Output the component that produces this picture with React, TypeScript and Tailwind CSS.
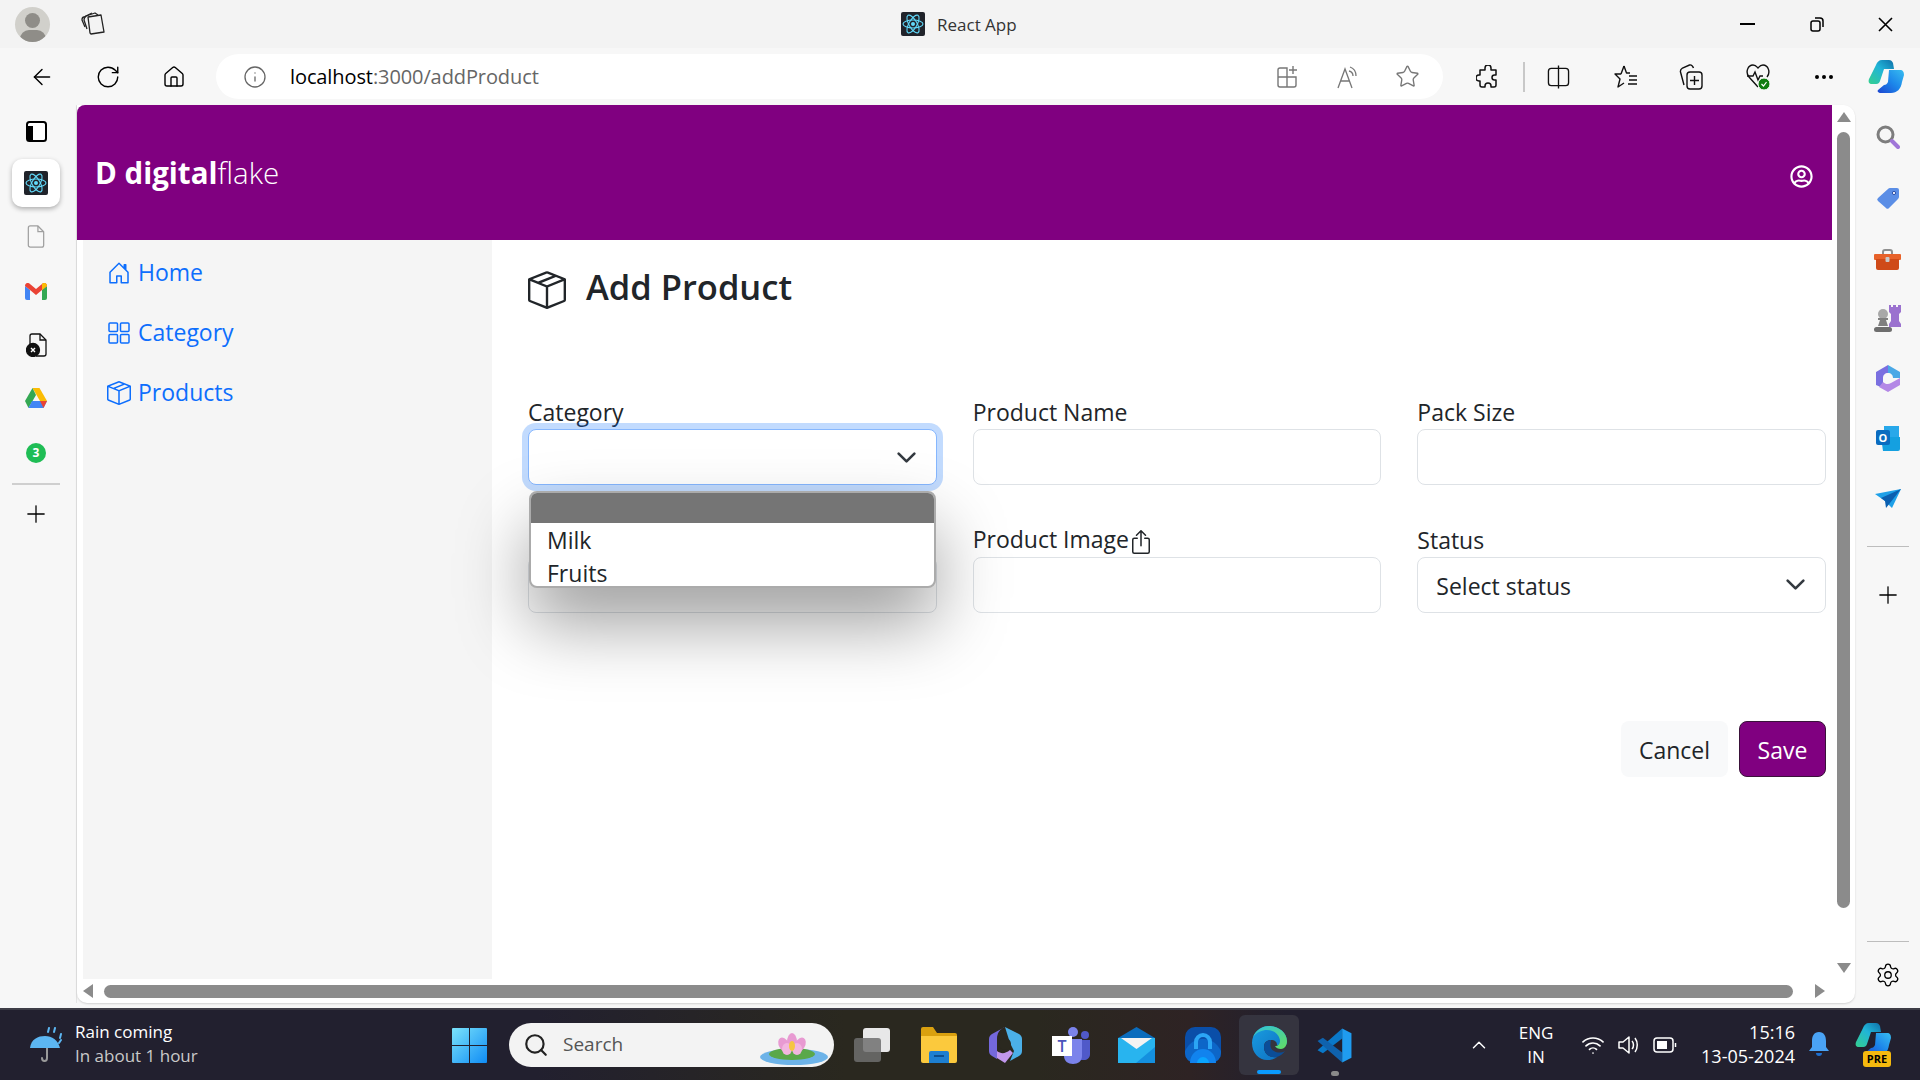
import React from "react"
import { ArrowLeft, RotateCw, House, Info, Star, Plus, Settings, Ellipsis, ChevronUp, Wifi, Search } from "lucide-react"
import { BsHouseDoor, BsBoxSeam, BsBoxArrowUp } from "react-icons/bs"
import { FaRegUserCircle } from "react-icons/fa"

const Chevron = ({ className }: { className: string }) => (
  <svg viewBox="0 0 16 16" className={className} fill="none" stroke="#343a40" strokeWidth="2" strokeLinecap="round" strokeLinejoin="round">
    <path d="m2 5 6 6 6-6" />
  </svg>
)

const ReactLogo = ({ className }: { className: string }) => (
  <svg viewBox="0 0 24 24" className={className}>
    <rect width="24" height="24" rx="2" fill="#20232a" />
    <g fill="none" stroke="#61dafb" strokeWidth="1.1">
      <ellipse cx="12" cy="12" rx="10" ry="4" />
      <ellipse cx="12" cy="12" rx="10" ry="4" transform="rotate(60 12 12)" />
      <ellipse cx="12" cy="12" rx="10" ry="4" transform="rotate(120 12 12)" />
    </g>
    <circle cx="12" cy="12" r="2" fill="#61dafb" />
  </svg>
)

const Copilot = ({ className }: { className: string }) => (
  <svg viewBox="0 0 36 34" className={className}>
    <defs>
      <linearGradient id="cpA" x1="0" y1="1" x2="1" y2="0">
        <stop offset="0" stopColor="#1d45d0" />
        <stop offset="0.5" stopColor="#1c86ea" />
        <stop offset="1" stopColor="#38bdf0" />
      </linearGradient>
      <linearGradient id="cpB" x1="0" y1="1" x2="1" y2="0">
        <stop offset="0" stopColor="#35d08f" />
        <stop offset="0.55" stopColor="#20b4d8" />
        <stop offset="1" stopColor="#0f6fa8" />
      </linearGradient>
    </defs>
    <path d="M18 0h3c2 0 3 1 4 3l1 6H16l-4 12c-1 3-3 3-5 3H4c-3 0-4-2-3-5L8 5c1-3 3-5 6-5Z" fill="url(#cpB)" />
    <path d="M21 10h11c3 0 4 2 4 5l-2 7c-1 7-5 11-11 11H13c-3 0-4-2-3-3l6-5c2 0 3-1 4-3Z" fill="url(#cpA)" />
  </svg>
)

const Windows = () => (
  <svg viewBox="0 0 35 35" className="w-[35px] h-[35px]">
    <defs>
      <linearGradient id="winG" x1="0" y1="0" x2="1" y2="1">
        <stop offset="0" stopColor="#7be3fb" />
        <stop offset="1" stopColor="#0f8cf5" />
      </linearGradient>
    </defs>
    <path d="M1 0h16v17H0V1a1 1 0 0 1 1-1ZM18 0h16a1 1 0 0 1 1 1v16H18ZM0 18h17v17H1a1 1 0 0 1-1-1ZM18 18h17v16a1 1 0 0 1-1 1H18Z" fill="url(#winG)" />
  </svg>
)

const Edge = () => (
  <svg viewBox="0 0 36 36" className="w-[36px] h-[36px]">
    <defs>
      <linearGradient id="edgeA" x1="0" y1="0" x2="1" y2="1">
        <stop offset="0" stopColor="#1a9ee0" />
        <stop offset="1" stopColor="#0c6cc0" />
      </linearGradient>
      <linearGradient id="edgeB" x1="0" y1="0" x2="1" y2="1">
        <stop offset="0" stopColor="#2fc2de" />
        <stop offset="1" stopColor="#63dd62" />
      </linearGradient>
    </defs>
    <path d="M18 1C8 1 1 9 1 18c0 10 7 17 15 17 4 0 8-1 10-3-6 1-13-2-13-10 0-5 3-7 7-7 4 0 6 2 6 5h8c2 0 2-2 2-4C36 8 28 1 18 1Z" fill="url(#edgeA)" />
    <path d="M13 22c0 8 7 11 13 10 3-1 6-3 8-6-3 2-8 2-11 0-4-2-4-6-3-11-4 0-7 3-7 7Z" fill="#0b4d97" />
    <path d="M18 1C11 1 5 5 2 12c4-5 9-7 14-7 8 0 13 6 13 11 0 3-2 5-5 5 1 2 3 3 6 3 3 0 6-3 6-8C36 8 28 1 18 1Z" fill="url(#edgeB)" />
  </svg>
)

const Lotus = () => (
  <svg viewBox="0 0 68 32" className="w-[68px] h-[32px]">
    <ellipse cx="34" cy="24" rx="34" ry="8" fill="#6db3e8" />
    <ellipse cx="32" cy="21" rx="23" ry="6" fill="#5aa84a" />
    <g fill="#e89ad2">
      <ellipse cx="32" cy="9" rx="5" ry="9" />
      <ellipse cx="24" cy="12" rx="5" ry="8" transform="rotate(-28 24 12)" />
      <ellipse cx="40" cy="12" rx="5" ry="8" transform="rotate(28 40 12)" />
      <ellipse cx="27" cy="16" rx="5" ry="6" fill="#f2b6e0" />
      <ellipse cx="37" cy="16" rx="5" ry="6" fill="#f2b6e0" />
    </g>
    <ellipse cx="32" cy="13" rx="3" ry="5" fill="#f5c542" />
  </svg>
)

const Umbrella = () => (
  <svg viewBox="0 0 36 36" className="w-[36px] h-[36px]">
    <path d="M18 14v17c0 4-5 4-5 0" fill="none" stroke="#9a9a9a" strokeWidth="2" strokeLinecap="round" />
    <path d="M1 21C2 12 9 9 16 9s13 4 15 12Z" fill="#5cb6f2" />
    <g stroke="#5cb6f2" strokeWidth="2" strokeLinecap="round">
      <path d="M19 5l1-4M25 5l1-4M31 11l1-4M30 16l2-3" />
    </g>
  </svg>
)

export default function App() {
  return (
    <div className="w-[1920px] h-[1080px] overflow-hidden flex flex-col bg-[#f7f7f7] font-['Open_Sans','Noto_Sans',sans-serif] text-[#212529]">
      {/* window title bar */}
      <div className="h-[48px] shrink-0 bg-[#f3f3f3] flex items-center">
        <div className="ml-[15px] w-[35px] h-[35px] rounded-full bg-[#d1d0cb] overflow-hidden relative">
          <div className="mx-auto mt-[6px] w-[15px] h-[15px] rounded-full bg-[#8f8d88]" />
          <div className="mx-auto mt-[2px] w-[26px] h-[18px] rounded-full bg-[#8f8d88]" />
        </div>
        <svg viewBox="0 0 24 24" className="ml-[31px] w-[24px] h-[24px]" fill="none" stroke="#222" strokeWidth="1.3" strokeLinejoin="round">
          <path d="M9 22 7 6l13-2 3 17-13 2Z" fill="#f3f3f3" transform="translate(0 -1)" />
          <path d="M6 17 3 8c0-2 1-3 2-4l9-3 3 2" />
          <path d="M4 15 1 8c0-2 1-3 2-3l8-4" />
        </svg>
        <div className="ml-[796px] w-[24px] h-[24px]">
          <ReactLogo className="w-[24px] h-[24px]" />
        </div>
        <span className="ml-[12px] mt-[2px] text-[17px] text-[#333]">React App</span>
        <div className="ml-auto w-[15px] h-[2px] bg-black" />
        <svg viewBox="0 0 14 16" className="ml-[55px] w-[14px] h-[16px]" fill="none" stroke="#000" strokeWidth="1.5">
          <rect x="1" y="5" width="9" height="10" rx="2" />
          <path d="M5 2h5a3 3 0 0 1 3 3v6" />
        </svg>
        <svg viewBox="0 0 15 15" className="ml-[54px] mr-[27px] w-[15px] h-[15px]" stroke="#000" strokeWidth="1.6">
          <path d="M1 1l13 13M14 1 1 14" />
        </svg>
      </div>

      {/* browser toolbar */}
      <div className="h-[57px] shrink-0 flex items-center">
        <ArrowLeft className="ml-[29px] w-[26px] h-[26px] text-black" strokeWidth={1.3} />
        <RotateCw className="ml-[40px] w-[26px] h-[26px] text-black" strokeWidth={1.3} />
        <House className="ml-[41px] w-[24px] h-[24px] text-black" strokeWidth={1.4} />
        <div className="ml-[30px] w-[1227px] h-[45px] rounded-full bg-white flex items-center">
          <Info className="ml-[27px] w-[24px] h-[24px] text-[#666]" strokeWidth={1.3} />
          <span className="ml-[23px] text-[20px] tracking-[-0.1px]">
            <span className="text-black">localhost</span>
            <span className="text-[#666]">:3000/addProduct</span>
          </span>
          <svg viewBox="0 0 22 24" className="ml-auto w-[22px] h-[24px]" fill="none" stroke="#777" strokeWidth="1.4">
            <path d="M11 12H2v8a2 2 0 0 0 2 2h7Zm0 0h9v8a2 2 0 0 1-2 2h-7M11 12V3H4a2 2 0 0 0-2 2v7" />
            <path d="M17 1v8M13 5h8" />
          </svg>
          <svg viewBox="0 0 24 24" className="ml-[38px] w-[24px] h-[24px]" fill="none" stroke="#777" strokeWidth="1.3">
            <path d="M2 23 9 4l7 19M4.5 16h9" />
            <path d="M14 2c3 1 6 4 6 9M13 6c2 .5 4 2 4 5" />
          </svg>
          <Star className="ml-[35px] mr-[23px] w-[25px] h-[25px] text-[#777]" strokeWidth={1.3} />
        </div>
        <svg viewBox="0 0 24 24" className="ml-[33px] w-[24px] h-[24px]" fill="none" stroke="#111" strokeWidth="1.5" strokeLinejoin="round">
          <path d="M9 3a3 3 0 0 1 6 0v2h5v5h-1.5a2.5 2.5 0 0 0 0 5H20v5a2 2 0 0 1-2 2h-3v-1a3 3 0 0 0-6 0v1H6a2 2 0 0 1-2-2v-4H3a3 3 0 0 1 0-6h1V5h5Z" />
        </svg>
        <div className="ml-[23px] w-[2px] h-[30px] bg-[#c8c8c8]" />
        <svg viewBox="0 0 24 26" className="ml-[22px] w-[23px] h-[26px]" fill="none" stroke="#111" strokeWidth="1.4">
          <path d="M12 1v24" />
          <rect x="1.5" y="4" width="21" height="18" rx="3" />
        </svg>
        <svg viewBox="0 0 24 24" className="ml-[44px] w-[24px] h-[24px]" fill="none" stroke="#111" strokeWidth="1.4" strokeLinejoin="round">
          <path d="M10 1l2.5 7H16M7 9H1l5 5-2 8 6-4M10 1 7 9" />
          <path d="M15 11h8M15 15h8M14 19h9" />
        </svg>
        <svg viewBox="0 0 24 26" className="ml-[41px] w-[24px] h-[26px]" fill="none" stroke="#111" strokeWidth="1.4">
          <rect x="8" y="8" width="15" height="17" rx="3" />
          <path d="M15.5 12v9M11 16.5h9" />
          <path d="M5 21 1.5 8c-.5-2 .5-3 2-4l7-3c2-.5 3 .5 4 3" />
        </svg>
        <svg viewBox="0 0 25 28" className="ml-[43px] w-[25px] h-[28px]" fill="none" stroke="#111" strokeWidth="1.4">
          <path d="M12 24 3 14C-1 9 2 2 7 2c3 0 4 2 5 3 1-1 2-3 5-3 5 0 8 7 4 12" />
          <path d="M1 13h6l2-4 3 8 2-4h3" />
          <circle cx="18" cy="21" r="6" fill="#107c10" stroke="#f7f7f7" strokeWidth="1" />
          <path d="m15.5 21 2 2 3-4" stroke="#fff" strokeWidth="1.2" />
        </svg>
        <Ellipsis className="ml-[41px] w-[24px] h-[24px] text-black" strokeWidth={2} />
        <Copilot className="ml-[32px] w-[36px] h-[34px]" />
      </div>

      <div className="h-[898px] shrink-0 flex">
        {/* left sidebar rail */}
        <div className="w-[77px] shrink-0 flex flex-col items-center border-r border-[#e4e4e4] pr-[4px]">
          <svg viewBox="0 0 21 21" className="mt-[16px] w-[21px] h-[21px]">
            <rect x="1" y="1" width="19" height="19" rx="2.5" fill="#fff" stroke="#000" strokeWidth="2" />
            <rect x="1" y="5" width="6" height="15" fill="#000" />
          </svg>
          <div className="mt-[17px] w-[48px] h-[48px] rounded-[10px] bg-white shadow-[0_2px_5px_rgba(0,0,0,0.3)] flex items-center justify-center">
            <ReactLogo className="w-[24px] h-[24px]" />
          </div>
          <svg viewBox="0 0 18 24" className="mt-[18px] w-[18px] h-[23px]" fill="none" stroke="#a0a0a0" strokeWidth="1.3">
            <path d="M3 1h8l6 6v14a2 2 0 0 1-2 2H3a2 2 0 0 1-2-2V3a2 2 0 0 1 2-2Z" />
            <path d="M11 1v6h6" />
          </svg>
          <svg viewBox="0 0 22 17" className="mt-[35px] w-[22px] h-[17px]">
            <path d="M0 3v12a2 2 0 0 0 2 2h3V7Z" fill="#4285f4" />
            <path d="M17 7v10h3a2 2 0 0 0 2-2V3Z" fill="#34a853" />
            <path d="M0 3c0-3 3-4 5-2l6 5 6-5c2-2 5-1 5 2l-5 4-6 5-6-5Z" fill="#ea4335" />
            <path d="M17 1c2-2 5-1 5 2l-5 4Z" fill="#fbbc04" />
          </svg>
          <svg viewBox="0 0 21 24" className="mt-[33px] w-[21px] h-[24px]" fill="none" stroke="#111" strokeWidth="1.3">
            <path d="M4 12V3a2 2 0 0 1 2-2h8l6 6v14a2 2 0 0 1-2 2H10" />
            <path d="M14 1v6h6" />
            <circle cx="7" cy="17" r="6.5" fill="#111" />
            <path d="m5 15 4 4m0-4-4 4" stroke="#fff" strokeWidth="1.4" />
          </svg>
          <svg viewBox="0 0 22 21" className="mt-[31px] w-[22px] h-[21px]">
            <path d="M7.5 0h7L22 13h-7Z" fill="#fbbc04" />
            <path d="M7.5 0 0 13l3.5 7L11 7Z" fill="#34a853" />
            <path d="M3.5 20 7 13h15l-3.5 7Z" fill="#4285f4" />
            <path d="M18.5 20 15 13h7Z" fill="#ea4335" />
          </svg>
          <div className="mt-[34px] w-[20px] h-[20px] rounded-full bg-[#1fbd55] flex items-center justify-center text-white text-[12px] font-bold leading-none">
            3
          </div>
          <div className="mt-[20px] w-[48px] h-[2px] bg-[#cfcfcf]" />
          <Plus className="mt-[15px] w-[28px] h-[28px] text-black" strokeWidth={1.1} />
        </div>

        {/* page viewport */}
        <div className="w-[1778px] shrink-0 flex flex-col bg-white rounded-tr-[12px] rounded-b-[10px] shadow-[0_1px_2px_rgba(0,0,0,0.15)]">
          <div className="h-[874px] flex">
            <div className="w-[1755px] flex flex-col">
              <div className="h-[135px] shrink-0 bg-[#800080] rounded-tl-[8px] flex items-center justify-between pl-[18px] pr-[19px] text-white">
                <div className="text-[29.5px] leading-none">
                  <span className="font-bold">D digital</span>
                  <span className="font-light">flake</span>
                </div>
                <FaRegUserCircle className="mt-[7px] w-[23px] h-[23px] text-white" />
              </div>
              <div className="flex-1 flex">
                {/* side nav */}
                <div className="ml-[6px] w-[409px] bg-[#f5f5f5] flex flex-col pl-[24px] pt-[14px] gap-[24px] text-[#0d6efd] text-[23px]">
                  <div className="h-[36px] flex items-center gap-[7px]">
                    <BsHouseDoor className="w-[24px] h-[24px] mt-[2px]" />
                    <span>Home</span>
                  </div>
                  <div className="h-[36px] flex items-center gap-[7px]">
                    <svg viewBox="0 0 24 24" className="w-[24px] h-[24px] mt-[2px]" fill="none" stroke="currentColor" strokeWidth="1.5">
                      <rect x="2" y="2" width="8.5" height="8.5" rx="1" />
                      <rect x="13.5" y="2" width="8.5" height="8.5" rx="1" />
                      <rect x="2" y="13.5" width="8.5" height="8.5" rx="1" />
                      <rect x="13.5" y="13.5" width="8.5" height="8.5" rx="1" />
                    </svg>
                    <span>Category</span>
                  </div>
                  <div className="h-[36px] flex items-center gap-[7px]">
                    <BsBoxSeam className="w-[24px] h-[24px] mt-[2px]" />
                    <span>Products</span>
                  </div>
                </div>

                {/* form */}
                <div className="flex-1 pl-[36px] pr-[6px] pt-[20px]">
                  <div className="h-[54px] flex items-center gap-[20px]">
                    <BsBoxSeam className="w-[38px] h-[38px] mt-[5px] text-[#212529]" />
                    <h1 className="text-[34.5px] font-semibold">Add Product</h1>
                  </div>
                  <div className="mt-[79px] grid grid-cols-3 gap-x-[36px] gap-y-[36px] text-[23px]">
                    <div>
                      <div className="h-[36px] leading-[38px]">Category</div>
                      <div className="relative h-[56px] rounded-lg bg-white border border-[#86b7fe] shadow-[0_0_0_6px_rgba(13,110,253,0.25)] flex items-center justify-end pr-[19px]">
                        <Chevron className="w-[21px] h-[21px]" />
                        <div className="absolute z-10 left-[0px] top-[61px] w-[407px] h-[97px] rounded-lg border-2 border-[#ababab] bg-white overflow-hidden shadow-[0_36px_70px_rgba(0,0,0,0.38)]">
                          <div className="h-[30px] bg-[#757575]" />
                          <div className="h-[33px] leading-[35px] pl-[16px]">Milk</div>
                          <div className="h-[33px] leading-[35px] pl-[16px]">Fruits</div>
                        </div>
                      </div>
                    </div>
                    <div>
                      <div className="h-[36px] leading-[38px]">Product Name</div>
                      <input className="block w-full h-[56px] rounded-lg bg-white border border-[#dee2e6]" />
                    </div>
                    <div>
                      <div className="h-[36px] leading-[38px]">Pack Size</div>
                      <input className="block w-full h-[56px] rounded-lg bg-white border border-[#dee2e6]" />
                    </div>
                    <div>
                      <div className="h-[36px]" />
                      <input className="block w-full h-[56px] rounded-lg bg-white border border-[#dee2e6]" />
                    </div>
                    <div>
                      <div className="h-[36px] flex items-center leading-[38px]">
                        <span>Product Image</span>
                        <BsBoxArrowUp className="w-[24px] h-[24px] mt-[6px]" />
                      </div>
                      <input className="block w-full h-[56px] rounded-lg bg-white border border-[#dee2e6]" />
                    </div>
                    <div>
                      <div className="h-[36px] leading-[38px]">Status</div>
                      <div className="h-[56px] rounded-lg bg-white border border-[#dee2e6] flex items-center justify-between pl-[18px] pr-[19px]">
                        <span className="mt-[2px]">Select status</span>
                        <Chevron className="w-[21px] h-[21px] -mt-[2px]" />
                      </div>
                    </div>
                  </div>
                  <div className="mt-[108px] flex justify-end gap-[11px] text-[23px]">
                    <button className="w-[107px] h-[56px] rounded-lg bg-[#f8f9fa] pt-[2px]">Cancel</button>
                    <button className="w-[87px] h-[56px] rounded-lg bg-[#800080] border border-[#3a123a] text-white pt-[2px]">Save</button>
                  </div>
                </div>
              </div>
            </div>

            {/* vertical scrollbar */}
            <div className="flex-1 flex flex-col items-start pl-[5px] pt-[7px]">
              <div className="w-0 h-0 border-x-[7px] border-x-transparent border-b-[10px] border-b-[#8b8b8b]" />
              <div className="mt-[10px] w-[13px] h-[776px] rounded-full bg-[#8b8b8b]" />
              <div className="mt-[55px] w-0 h-0 border-x-[7px] border-x-transparent border-t-[10px] border-t-[#8b8b8b]" />
            </div>
          </div>

          {/* horizontal scrollbar */}
          <div className="h-[24px] flex items-center pl-[6px]">
            <div className="w-0 h-0 border-y-[7px] border-y-transparent border-r-[10px] border-r-[#8b8b8b]" />
            <div className="ml-[11px] w-[1689px] h-[13px] rounded-full bg-[#8b8b8b]" />
            <div className="ml-[22px] w-0 h-0 border-y-[7px] border-y-transparent border-l-[10px] border-l-[#8b8b8b]" />
          </div>
        </div>

        {/* right sidebar rail */}
        <div className="flex-1 flex flex-col items-center">
          <svg viewBox="0 0 24 25" className="mt-[20px] w-[24px] h-[25px]" fill="none">
            <circle cx="9.5" cy="9.5" r="7.5" stroke="#7d7d7d" strokeWidth="3" />
            <path d="m16 16 6 6" stroke="#a076d8" strokeWidth="4" strokeLinecap="round" />
          </svg>
          <svg viewBox="0 0 24 23" className="mt-[37px] w-[24px] h-[23px]">
            <path d="M14 1h7a2 2 0 0 1 2 2v7a3 3 0 0 1-1 2l-9 9a2 2 0 0 1-3 0l-8-7a2 2 0 0 1 0-3l10-9a3 3 0 0 1 2-1Z" fill="#5b8ee6" />
            <circle cx="18" cy="6" r="1.6" fill="#fff" stroke="#2c4fa8" />
          </svg>
          <svg viewBox="0 0 27 21" className="mt-[39px] w-[27px] h-[21px]">
            <path d="M9 6V3a2 2 0 0 1 2-2h5a2 2 0 0 1 2 2v3" fill="none" stroke="#8f8f8f" strokeWidth="2" />
            <rect x="0" y="5" width="27" height="6" rx="1" fill="#e8622a" />
            <path d="M2 10h23v9a2 2 0 0 1-2 2H4a2 2 0 0 1-2-2Z" fill="#cf4a18" />
            <rect x="11.5" y="8" width="4" height="5" rx="1" fill="#c9c9c9" />
          </svg>
          <svg viewBox="0 0 28 27" className="mt-[35px] w-[28px] h-[27px]">
            <path d="M15 0h2v2h2V0h3v2h2V0h3v7l-2 2v7l2 3v3H15v-3l2-3V9l-2-2Z" fill="#9b72cf" />
            <circle cx="9" cy="9" r="5" fill="#a8a8a8" />
            <path d="M4 13h10v2h-2l2 6H4l2-6H4Z" fill="#7f7f7f" />
            <rect x="0" y="22" width="18" height="5" rx="2.5" fill="#6e6e6e" />
          </svg>
          <svg viewBox="0 0 24 27" className="mt-[33px] w-[24px] h-[27px]">
            <path d="M12 0 24 7v6h-7c0-3-2-5-5-5Z" fill="#4aa8e6" />
            <path d="M12 0 0 7v13l7 3V13c0-3 2-5 5-5Z" fill="#7a6fe0" />
            <path d="M7 17c2 2 5 3 8 1l9-5v7l-12 7-9-5Z" fill="#b488e6" />
          </svg>
          <svg viewBox="0 0 24 25" className="mt-[34px] w-[24px] h-[25px]">
            <rect x="8" y="0" width="15" height="12" fill="#28a8ea" />
            <path d="M5 11h19v12a2 2 0 0 1-2 2H7Z" fill="#14a0e0" />
            <rect x="0" y="4" width="14" height="15" rx="2" fill="#0a6cc0" />
            <text x="7" y="15.5" textAnchor="middle" fontSize="11" fontWeight="700" fill="#fff">O</text>
          </svg>
          <svg viewBox="0 0 26 19" className="mt-[38px] w-[26px] h-[19px]">
            <path d="M0 5 26 0 17 19 10 12Z" fill="#1ea0e8" />
            <path d="M26 0 6 9l4 3 1 7 4-5Z" fill="#0b5fb0" />
          </svg>
          <div className="mt-[38px] w-[42px] h-[1px] bg-[#bdbdbd]" />
          <Plus className="mt-[34px] w-[28px] h-[28px] text-black" strokeWidth={1.1} />
          <div className="mt-auto w-[42px] h-[1px] bg-[#bdbdbd]" />
          <Settings className="mt-[20px] mb-[15px] w-[26px] h-[26px] text-black" strokeWidth={1.2} />
        </div>
      </div>

      <div className="h-[5px] shrink-0" />

      {/* windows taskbar */}
      <div className="h-[72px] shrink-0 border-t-2 border-[#3e3d47] bg-[linear-gradient(90deg,#22202f_0%,#22202f_28%,#2a281f_44%,#2a281f_54%,#2e2324_62%,#22202f_67%)] flex items-center text-white">
        <div className="ml-[29px] w-[36px] h-[36px]">
          <Umbrella />
        </div>
        <div className="ml-[10px] w-[377px] text-[17px] leading-[24px] -mt-[2px]">
          <div>Rain coming</div>
          <div className="text-[#c9c9c9]">In about 1 hour</div>
        </div>
        <Windows />
        <div className="ml-[22px] w-[325px] h-[44px] rounded-full bg-[#f3f3f3] flex items-center relative">
          <Search className="ml-[14px] w-[26px] h-[26px] text-[#222]" strokeWidth={2} />
          <span className="ml-[14px] -mt-[2px] text-[19px] text-[#555]">Search</span>
          <div className="absolute right-[6px] bottom-[2px]">
            <Lotus />
          </div>
        </div>
        <div className="ml-[20px] w-[36px] h-[36px] flex items-center">
          <div className="relative w-[36px] h-[34px]">
            <div className="absolute right-0 top-0 w-[27px] h-[24px] rounded-[3px] bg-[#e8e8e8]" />
            <div className="absolute left-0 bottom-0 w-[27px] h-[24px] rounded-[3px] bg-[#6f6f6f]/85" />
          </div>
        </div>
        <svg viewBox="0 0 36 36" className="ml-[31px] w-[36px] h-[36px]">
          <path d="M0 2a2 2 0 0 1 2-2h10l4 6h18a2 2 0 0 1 2 2v6H0Z" fill="#d9a00f" />
          <path d="M0 9h36v25a2 2 0 0 1-2 2H2a2 2 0 0 1-2-2Z" fill="#fbc93d" />
          <path d="M10 24h16a2 2 0 0 1 2 2v10H8V26a2 2 0 0 1 2-2Z" fill="#1d7fd1" />
          <rect x="13" y="28" width="10" height="2" fill="#0c4f8f" />
        </svg>
        <svg viewBox="0 0 33 36" className="ml-[32px] w-[33px] h-[36px]">
          <path d="M16 0 30 7c2 1 3 3 3 5v12c0 2-1 4-3 5l-9 5 4-10-4-8Z" fill="#4bb0e8" />
          <path d="M16 0 3 7c-2 1-3 3-3 5v12c0 2 1 4 3 5l5 3V12c0-6 3-10 8-12Z" fill="#7468dc" />
          <path d="M8 24c4 3 8 3 13-1l3 3-8 10-8-5Z" fill="#c197ec" />
          <circle cx="16" cy="17" r="6" fill="#2a281f" />
        </svg>
        <svg viewBox="0 0 38 38" className="ml-[30px] w-[38px] h-[38px]">
          <circle cx="21" cy="6" r="5" fill="#7b83eb" />
          <circle cx="33" cy="9" r="4" fill="#5059c9" />
          <path d="M28 14h10v14c0 4-3 6-6 6h-4Z" fill="#5059c9" />
          <path d="M12 13h18v17c0 5-4 8-9 8s-9-3-9-8Z" fill="#7b83eb" />
          <rect x="0" y="10" width="20" height="20" fill="#fff" />
          <text x="10" y="26" textAnchor="middle" fontSize="16" fontWeight="600" fill="#4b53bc">T</text>
        </svg>
        <svg viewBox="0 0 37 36" className="ml-[28px] w-[37px] h-[36px]">
          <path d="M18.5 0 37 11v25H0V11Z" fill="#0a6cbd" />
          <path d="M0 11h37v25H0Z" fill="#28b4ef" />
          <path d="M37 36H18l19-16Z" fill="#1490df" />
          <path d="M3 11h31L18.5 22Z" fill="#f3f3f3" />
        </svg>
        <svg viewBox="0 0 36 36" className="ml-[30px] w-[36px] h-[36px]">
          <rect width="36" height="36" rx="10" fill="#0a4ea8" />
          <path d="M0 24c4-8 10-12 18-12s14 4 18 12v2a10 10 0 0 1-10 10H10A10 10 0 0 1 0 26Z" fill="#0d66c8" />
          <path d="M9 22V15a9 9 0 0 1 18 0v7h-4v-7a5 5 0 0 0-10 0v7Z" fill="#2ba5f5" />
          <path d="M5 36c0-8 6-14 13-14s13 6 13 14Z" fill="#1183ee" />
          <path d="M12 36c0-3 3-6 6-6s6 3 6 6Z" fill="#0aa5ff" />
        </svg>
        <div className="ml-[18px] w-[60px] h-[60px] rounded-[6px] bg-[#35343f] flex flex-col items-center relative pt-[10px]">
          <Edge />
          <div className="absolute bottom-[1px] w-[24px] h-[4px] rounded-full bg-[#0a9bff]" />
        </div>
        <div className="ml-[17px] w-[37px] h-[37px] relative">
          <svg viewBox="0 0 24 24" className="w-[37px] h-[37px]">
            <path d="M17 1v6.5L4.5 17 1 15Z" fill="#0a78c8" />
            <path d="M17 23v-6.5L4.5 7 1 9Z" fill="#0f62ad" />
            <path d="M17 1l6 3v16l-6 3Z" fill="#1f9cf0" />
          </svg>
          <div className="absolute left-[15px] top-[44px] w-[8px] h-[5px] rounded-full bg-[#8a8a8a]" />
        </div>
        <ChevronUp className="ml-[115px] w-[22px] h-[22px] text-white" strokeWidth={1.6} />
        <div className="ml-[16px] w-[60px] text-center text-[17px] leading-[24px] -mt-[1px]">
          <div>ENG</div>
          <div>IN</div>
        </div>
        <Wifi className="ml-[15px] w-[24px] h-[24px] text-white" strokeWidth={1.7} />
        <svg viewBox="0 0 24 24" className="ml-[11px] w-[24px] h-[24px]" fill="none" stroke="#fff" strokeWidth="1.5" strokeLinejoin="round">
          <path d="M3 9v6h4l6 5V4L7 9Z" />
          <path d="M16 8c2 2 2 6 0 8M19 5c3 4 3 10 0 14" />
        </svg>
        <svg viewBox="0 0 24 16" className="ml-[13px] w-[24px] h-[16px]" fill="none" stroke="#fff" strokeWidth="1.5">
          <rect x="1" y="1" width="19" height="14" rx="3" />
          <rect x="4" y="4" width="10" height="8" fill="#fff" stroke="none" />
          <path d="M22.5 6v4" />
        </svg>
        <div className="ml-[8px] w-[110px] text-right text-[18px] leading-[24px] -mt-[2px]">
          <div>15:16</div>
          <div>13-05-2024</div>
        </div>
        <svg viewBox="0 0 20 26" className="ml-[14px] w-[20px] h-[26px]">
          <path d="M10 0c5 0 7 4 7 9v6l3 4H0l3-4V9c0-5 2-9 7-9Z" fill="#4aa3f5" />
          <path d="M7 21h6a3 3 0 0 1-6 0Z" fill="#1d6fd0" />
        </svg>
        <div className="ml-[26px] w-[36px] h-[44px] relative">
          <Copilot className="w-[36px] h-[34px]" />
          <div className="absolute left-[8px] bottom-0 w-[28px] h-[16px] rounded-[3px] bg-[#f5b90f] text-black text-[11px] font-bold leading-[16px] text-center">
            PRE
          </div>
        </div>
      </div>
    </div>
  )
}
